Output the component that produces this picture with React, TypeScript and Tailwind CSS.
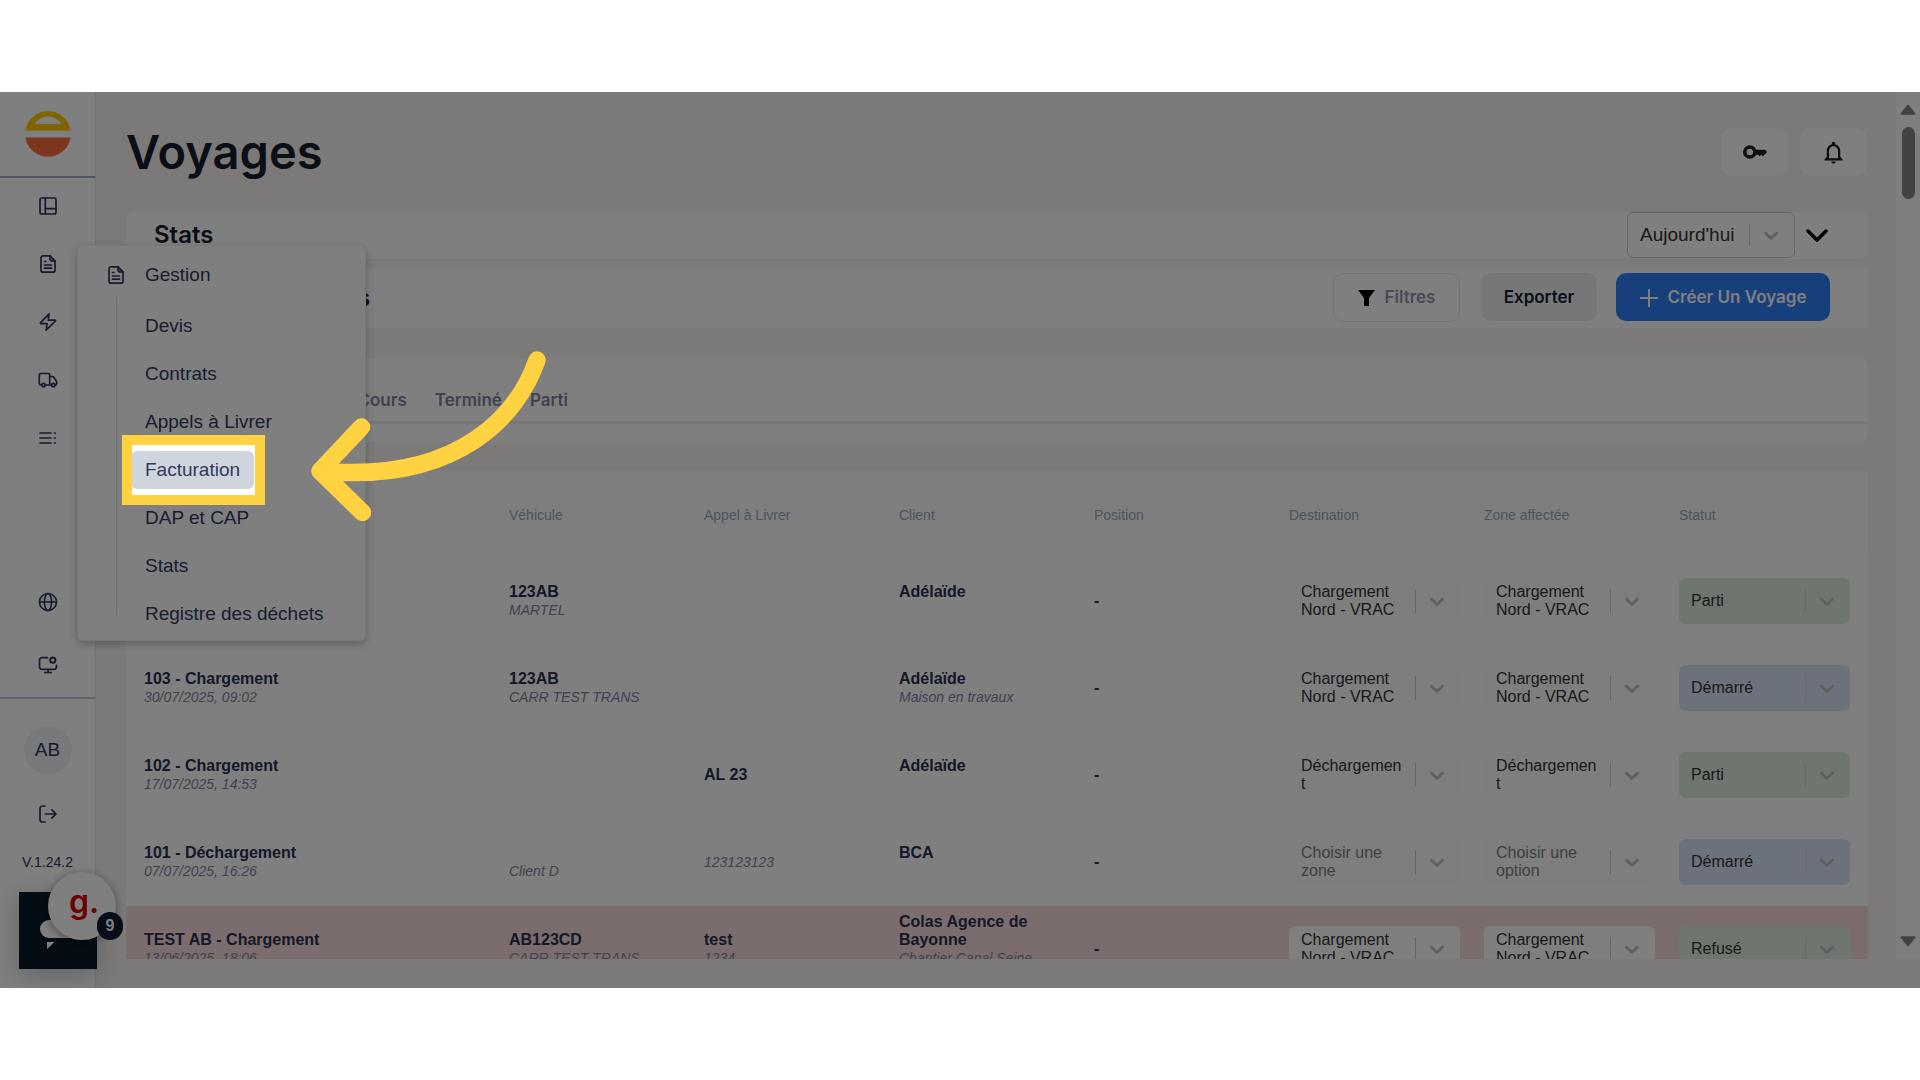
import React, { useState } from 'react';

type Choice = { text: string; placeholder?: boolean };

type Voyage = {
  name?: string;
  date?: string;
  vehicle?: string;
  carrier?: string;
  call?: string;
  callRef?: string;
  client: string;
  site?: string;
  destination: Choice;
  zone: Choice;
  status: string;
  refused?: boolean;
};

const nord: Choice = { text: 'Chargement Nord - VRAC' };
const unload: Choice = { text: 'Déchargement' };

const voyages: Voyage[] = [
  { vehicle: '123AB', carrier: 'MARTEL', client: 'Adélaïde', destination: nord, zone: nord, status: 'Parti' },
  { name: '103 - Chargement', date: '30/07/2025, 09:02', vehicle: '123AB', carrier: 'CARR TEST TRANS', client: 'Adélaïde', site: 'Maison en travaux', destination: nord, zone: nord, status: 'Démarré' },
  { name: '102 - Chargement', date: '17/07/2025, 14:53', call: 'AL 23', client: 'Adélaïde', destination: unload, zone: unload, status: 'Parti' },
  { name: '101 - Déchargement', date: '07/07/2025, 16:26', carrier: 'Client D', callRef: '123123123', client: 'BCA', destination: { text: 'Choisir une zone', placeholder: true }, zone: { text: 'Choisir une option', placeholder: true }, status: 'Démarré' },
  { name: 'TEST AB - Chargement', date: '13/06/2025, 18:06', vehicle: 'AB123CD', carrier: 'CARR TEST TRANS', call: 'test', callRef: '1234', client: 'Colas Agence de Bayonne', site: 'Chantier Canal Seine Nord\u2011Europe', destination: nord, zone: nord, status: 'Refusé', refused: true },
];

const menuItems = ['Devis', 'Contrats', 'Appels à Livrer', 'Facturation', 'DAP et CAP', 'Stats', 'Registre des déchets'];
const tabs = ['Tous', 'Prévu', 'En Cours', 'Terminé', 'Parti'];
const columns = ['Véhicule', 'Appel à Livrer', 'Client', 'Position', 'Destination', 'Zone affectée', 'Statut'];

function Icon({ children }: { children: React.ReactNode }) {
  return (
    <svg className="size-5" viewBox="0 0 20 20" fill="none" stroke="currentColor" strokeWidth="1.7" strokeLinecap="round" strokeLinejoin="round" aria-hidden="true">
      {children}
    </svg>
  );
}

function FileIcon() {
  return (
    <Icon>
      <path d="M12 1.8H5a2 2 0 0 0-2 2v12.4a2 2 0 0 0 2 2h10a2 2 0 0 0 2-2V6.8z" />
      <path d="M12 1.8v3a2 2 0 0 0 2 2h3" fill="currentColor" fillOpacity="0.4" />
      <path d="M6.5 7.5h1.3M6.5 11h7M6.5 14.2h7" />
    </Icon>
  );
}

function Chevron({ className }: { className: string }) {
  return (
    <svg className={className} viewBox="0 0 20 20" fill="currentColor" aria-hidden="true">
      <path d="M4.516 7.548c0.436-0.446 1.043-0.481 1.576 0l3.908 3.747 3.908-3.747c0.533-0.481 1.141-0.446 1.574 0 0.436 0.445 0.408 1.197 0 1.615-0.406 0.418-4.695 4.502-4.695 4.502-0.217 0.223-0.502 0.335-0.787 0.335s-0.57-0.112-0.789-0.335c0 0-4.287-4.084-4.695-4.502s-0.436-1.17 0-1.615z" />
    </svg>
  );
}

/*
Drop-down whose current value can wrap on two lines, the native select lies over it
*/
function SelectBox({ label, choice, options, className, divider = 'bg-[#cccccc]' }: {
  label: string,
  choice: Choice,
  options: string[],
  className: string,
  divider?: string,
}) {
  const [value, setValue] = useState(choice.text);
  const isPlaceholder = choice.placeholder && value === choice.text;

  return (
    <div className={`relative flex items-center rounded-md pl-3 ${className}`}>
      <span className={`flex-1 min-w-0 break-words ${isPlaceholder ? 'text-[#808080]' : 'text-[#333333]'}`}>{value}</span>
      <span className={`ml-3 w-px self-stretch my-[11px] ${divider}`} />
      <Chevron className="size-6 ml-[9px] mr-[11px] text-[#bfbfbf]" />
      <select
        aria-label={label}
        value={value}
        onChange={(e) => setValue(e.target.value)}
        className="absolute inset-0 size-full opacity-0 cursor-pointer"
      >
        {options.map((option) => <option key={option}>{option}</option>)}
      </select>
    </div>
  );
}

function Sidebar() {
  const itemClass = 'flex h-[58px] items-center justify-center';

  return (
    <aside className="flex w-24 shrink-0 flex-col border-r border-[#dfe5ee] bg-white text-[#2f365c]">
      <div className="flex h-[86px] items-center justify-center border-b-2 border-[#a5aecb]">
        <svg className="size-[46px]" viewBox="0 0 46 46" aria-hidden="true">
          <path d="M0.3 19.5a23 23 0 0 1 45.4 0z" fill="#ffc800" />
          <path d="M9.5 13a16 16 0 0 1 27 0z" fill="#fff" />
          <path d="M0.3 26.5a23 23 0 0 0 45.4 0z" fill="#fb6f3f" />
        </svg>
      </div>
      <nav className="-mt-px flex flex-col">
        <a href="#dashboard" aria-label="Tableau de bord" className={itemClass}>
          <Icon><rect x="2" y="2" width="16" height="16" rx="2" /><path d="M7.3 2v16M7.3 12.7H18" /></Icon>
        </a>
        <a href="#gestion" aria-label="Gestion" className={itemClass}><FileIcon /></a>
        <a href="#actions" aria-label="Actions" className={itemClass}>
          <Icon><path d="M11 1.8 2.6 10.6c-.5.6-.3 1 .5 1h6l-1 6.6 9.3-9c.5-.6.3-1-.5-1h-6.6z" /></Icon>
        </a>
        <a href="#transport" aria-label="Transport" className={itemClass}>
          <Icon>
            <path d="M4 15H2.8a1.5 1.5 0 0 1-1.5-1.5V5A1.5 1.5 0 0 1 2.8 3.5h7.4A1.5 1.5 0 0 1 11.7 5v10H7M11.7 6.5h2.6c.6 0 1.2.3 1.5.8l2.5 3.7c.3.4.4.8.4 1.2v1.3a1.5 1.5 0 0 1-1.5 1.5M11.7 15h2" />
            <circle cx="5.5" cy="15" r="1.7" /><circle cx="15.3" cy="15" r="1.7" />
          </Icon>
        </a>
        <a href="#listes" aria-label="Listes" className={itemClass}>
          <Icon><path d="M2 5h11M2 10h11M2 15h11M16.5 5h.8M16.5 10h.8M16.5 15h.8" /></Icon>
        </a>
      </nav>
      <div className="mt-auto flex flex-col">
        <a href="#langue" aria-label="Langue" className="flex h-[62px] items-center justify-center">
          <Icon><circle cx="10" cy="10" r="8.5" /><ellipse cx="10" cy="10" rx="3.6" ry="8.5" /><path d="M1.5 10h17" /></Icon>
        </a>
        <a href="#ecran" aria-label="Écran" className="flex h-16 items-center justify-center">
          <Icon>
            <path d="M9.5 2.7H4a2.5 2.5 0 0 0-2.5 2.5v6.6A2.5 2.5 0 0 0 4 14.3h12a2.5 2.5 0 0 0 2.5-2.5v-1.5M10 14.3v3M6.7 17.5h6.6" />
            <circle cx="14.8" cy="5.2" r="2.6" strokeWidth="2" />
          </Icon>
        </a>
      </div>
      <div className="flex flex-col items-center border-t-2 border-[#b9cbe0] pt-[27px] pb-[116px]">
        <span className="flex size-12 items-center justify-center rounded-full bg-[#eef2f7] text-[19px]">AB</span>
        <button aria-label="Déconnexion" className="mt-[30px]">
          <Icon><path d="M7 2H4.5A2.5 2.5 0 0 0 2 4.5v11A2.5 2.5 0 0 0 4.5 18H7M7.5 10h10.3M13.8 5.8 18 10l-4.2 4.2" /></Icon>
        </button>
        <span className="mt-[28px] text-sm">V.1.24.2</span>
      </div>
    </aside>
  );
}

function TwoLines({ title, detail }: { title?: string; detail?: string }) {
  return (
    <div className="leading-[18px]">
      <p className="min-h-[18px] font-bold">{title}</p>
      <p className="min-h-[18px] text-sm leading-[18px] italic text-[#8184a0]">{detail}</p>
    </div>
  );
}

function VoyageRow({ voyage, label }: { voyage: Voyage; label: string }) {
  const box = `h-[46px] leading-[18px] ${voyage.refused ? 'bg-white' : 'bg-[#fdfdfd]'}`;
  const statusColor = voyage.status === 'Démarré' ? 'bg-[#d8e4f7]' : 'bg-[#deeddf]';

  return (
    <tr className={`h-[87px] ${voyage.refused ? 'bg-[#f7dadc]' : ''}`}>
      <td className="pl-[18px] pb-[2px]"><TwoLines title={voyage.name} detail={voyage.date} /></td>
      <td className="px-3 pb-[2px]"><TwoLines title={voyage.vehicle} detail={voyage.carrier} /></td>
      <td className="px-3 pb-[2px]">
        <div className="leading-[18px]">
          {voyage.call && <p className="font-bold">{voyage.call}</p>}
          {voyage.callRef && <p className="text-sm leading-[18px] italic text-[#8184a0]">{voyage.callRef}</p>}
        </div>
      </td>
      <td className="px-3 pb-[2px]"><TwoLines title={voyage.client} detail={voyage.site} /></td>
      <td className="px-3 pb-[2px] font-bold">-</td>
      <td className="px-3 pb-[2px]">
        <SelectBox label={`Destination ${label}`} choice={voyage.destination} options={[voyage.destination.text]} className={box} />
      </td>
      <td className="px-3 pb-[2px]">
        <SelectBox label={`Zone affectée ${label}`} choice={voyage.zone} options={[voyage.zone.text]} className={box} />
      </td>
      <td className="pl-3 pr-[18px] pb-[2px]">
        <SelectBox label={`Statut ${label}`} choice={{ text: voyage.status }} options={['Parti', 'Démarré', 'Refusé']} className={`h-[46px] ${statusColor}`} divider="bg-[#cccccc]/70" />
      </td>
    </tr>
  );
}

function GestionMenu() {
  return (
    <div className="absolute left-[77px] top-[153px] w-[289px] rounded-md border border-[#f0f0f0] bg-white pt-[9px] pb-[7px] text-[19px] text-[#323a5c] shadow-[0_3px_8px_rgba(0,0,0,0.25)]">
      <div className="flex h-10 items-center pl-7">
        <FileIcon />
        <span className="ml-[19px]">Gestion</span>
      </div>
      <div className="flex">
        <div className="ml-[38px] mt-[2px] mb-[18px] w-px bg-[#e6e6ea]" />
        <ul className="flex flex-col items-start gap-[10px] pl-[14px] pt-3">
          {menuItems.map((item) => (
            <li key={item}>
              <a href={`#${item}`} className={`flex h-[38px] items-center rounded-md px-[14px] ${item === 'Facturation' ? 'bg-[#cfd5dd]' : ''}`}>{item}</a>
            </li>
          ))}
        </ul>
      </div>
    </div>
  );
}

function ChatWidgets() {
  return (
    <>
      <button aria-label="Messagerie" className="absolute left-[19px] bottom-[19px] h-[77px] w-[78px] bg-[#0a1b29] shadow-[0_6px_24px_rgba(10,27,41,0.25)]">
        <svg className="size-full" viewBox="0 0 78 77" aria-hidden="true">
          <path d="M30 28h28v18H30a9 9 0 0 1 0-18zM28 50h7.5l-7.5 7z" fill="#fff" />
        </svg>
      </button>
      <button aria-label="Guide, 9 notifications" className="absolute left-12 bottom-12 size-[68px] rounded-full bg-white shadow-[0_2px_10px_rgba(0,0,0,0.4)]">
        <span className='block pl-1 pb-2 font-["Inter",sans-serif] text-[32px] leading-none font-semibold text-[#d80000]'>g.</span>
        <span className="absolute -right-[7px] bottom-0 flex h-7 w-[26px] items-center justify-center rounded-full bg-[#101a30] text-base font-bold text-white">9</span>
      </button>
    </>
  );
}

function App() {
  const [activeTab, setActiveTab] = useState('Tous');

  return (
    <div className='h-screen bg-white py-[92px] font-["Liberation_Sans",Arial,sans-serif]'>
      <div className="relative flex h-full overflow-hidden bg-[#f9f5f0]">
        <Sidebar />

        <div className="mb-[29px] flex min-w-0 flex-1 overflow-hidden">
          <main className='flex min-w-0 flex-1 flex-col pl-[30px] pr-7 pt-9 font-["Inter",sans-serif]'>
            <header className="flex h-12 shrink-0 items-center justify-between pr-px">
              <h1 className="text-[47px] leading-[48px] font-semibold text-[#151c2e]">Voyages</h1>
              <div className="flex gap-3">
                <button aria-label="Clés" className="flex h-12 w-[66px] items-center justify-center rounded-[10px] bg-white text-[#1c1c20]">
                  <svg className="size-6" viewBox="0 0 24 24" fill="currentColor" aria-hidden="true">
                    <path fillRule="evenodd" d="M6.8 5.2a6.8 6.8 0 1 1 0 13.6 6.8 6.8 0 0 1 0-13.6zM6.8 8.8a3.2 3.2 0 1 0 0 6.4 3.2 3.2 0 0 0 0-6.4z" />
                    <path d="M12.5 9.7h9.6L24 12l-2.5 2.7-1.7 1.5-1.7-1.5-1.5 1.5-1.6-1.5h-2.5z" />
                  </svg>
                </button>
                <button aria-label="Notifications" className="flex h-12 w-[67px] items-center justify-center rounded-[10px] bg-white text-[#1c1c20]">
                  <svg className="size-[27px]" viewBox="0 0 24 24" fill="currentColor" aria-hidden="true">
                    <path d="M12 22c1.1 0 2-.9 2-2h-4c0 1.1.9 2 2 2zm6-6v-5c0-3.07-1.63-5.64-4.5-6.32V4c0-.83-.67-1.5-1.5-1.5s-1.5.67-1.5 1.5v.68C7.64 5.36 6 7.92 6 11v5l-2 2v1h16v-1l-2-2zm-2 1H8v-6c0-2.48 1.51-4.5 4-4.5s4 2.02 4 4.5v6z" />
                  </svg>
                </button>
              </div>
            </header>

            <section className="mt-9 flex h-[47px] shrink-0 items-center rounded-lg bg-white pl-7 pr-10">
              <h2 className="pb-[2px] text-2xl font-semibold text-[#151c2e]">Stats</h2>
              <SelectBox
                label="Période"
                choice={{ text: "Aujourd'hui" }}
                options={["Aujourd'hui", 'Hier', 'Cette semaine']}
                className='ml-auto h-[46px] w-[168px] self-start border border-[#cccccc] font-["Liberation_Sans",Arial,sans-serif] text-[19px]'
              />
              <button aria-label="Déplier les stats" className="ml-[11px]">
                <svg className="h-[13px] w-[22px]" viewBox="0 0 22 13" fill="none" stroke="#000" strokeWidth="3.5" strokeLinecap="round" aria-hidden="true">
                  <path d="M2 2l9 9 9-9" />
                </svg>
              </button>
            </section>

            <section className="mt-[9px] flex h-[60px] shrink-0 items-center bg-white pl-[34px] pr-[38px] pb-[2px] text-[17px] font-semibold">
              <h2 className="pt-[2px] text-2xl text-[#151c2e]">Liste des Voyages</h2>
              <button className="ml-auto flex h-[49px] w-[127px] items-center justify-center gap-[10px] rounded-[10px] border border-[#ebebef] pt-[2px] text-[#9193ad]">
                <svg className="h-4 w-[17px]" viewBox="0 0 17 16" aria-hidden="true"><path d="M0 0h17l-6 8v8H6V8z" fill="#000" /></svg>
                Filtres
              </button>
              <button className="ml-[21px] h-12 w-[116px] rounded-[10px] bg-[#eeeeee] pt-[2px] text-[#151c2e]">Exporter</button>
              <button className="ml-[19px] flex h-12 w-[214px] items-center justify-center gap-[10px] rounded-[10px] bg-[#2c7ff7] pt-[2px] text-white">
                <svg className="size-[18px]" viewBox="0 0 18 18" stroke="currentColor" strokeWidth="2" aria-hidden="true"><path d="M9 0v18M0 9h18" /></svg>
                Créer Un Voyage
              </button>
            </section>

            <section className="mt-[30px] h-[84px] shrink-0 rounded-lg bg-white">
              <div className="flex h-[66px] items-end gap-7 border-b-[3px] border-[#ececee] pl-[63px] pb-[9px]">
                {tabs.map((tab) => (
                  <button key={tab} onClick={() => setActiveTab(tab)} aria-pressed={tab === activeTab} className="text-[17px] leading-6 font-semibold text-[#8083a3]">{tab}</button>
                ))}
              </div>
            </section>

            <section className='mt-[29px] min-h-0 flex-1 overflow-hidden bg-white font-["Liberation_Sans",Arial,sans-serif]'>
              <table className="w-full table-fixed text-left text-[#2b3150]">
                <colgroup>
                  <col />
                  {columns.slice(0, 6).map((column) => <col key={column} className="w-[195px]" />)}
                  <col className="w-[201px]" />
                </colgroup>
                <thead>
                  <tr className="h-[87px] bg-[#fcfdfd]">
                    <td />
                    {columns.map((column) => (
                      <th key={column} className="px-3 text-sm font-normal text-[#98a6bc]">{column}</th>
                    ))}
                  </tr>
                </thead>
                <tbody>
                  {voyages.map((voyage, index) => <VoyageRow key={index} voyage={voyage} label={voyage.name ?? voyage.client} />)}
                </tbody>
              </table>
            </section>
          </main>

          <div className="flex w-6 shrink-0 flex-col items-center bg-[#fcfcfc] pt-3 pb-3">
            <svg className="h-[11px] w-4" viewBox="0 0 16 11" fill="#858585" stroke="#858585" strokeWidth="2" strokeLinejoin="round" aria-hidden="true"><path d="M8 1.5 1.5 9.8h13z" /></svg>
            <div className="mt-3 h-[72px] w-[13px] rounded-full bg-[#858585]" />
            <svg className="mt-auto h-[11px] w-4" viewBox="0 0 16 11" fill="#858585" stroke="#858585" strokeWidth="2" strokeLinejoin="round" aria-hidden="true"><path d="M8 9.5 1.5 1.2h13z" /></svg>
          </div>
        </div>

        <ChatWidgets />
        <GestionMenu />

        {/* Guide step: dims everything but the highlighted entry */}
        <div className="pointer-events-none absolute left-[122px] top-[343px] h-[70px] w-[143px] border-[10px] border-[#ffd242] shadow-[0_0_0_2000px_rgba(0,0,0,0.5)]" />
        <svg className="pointer-events-none absolute left-[300px] top-[248px] h-[190px] w-[260px]" viewBox="0 0 260 190" fill="none" stroke="#ffd242" strokeWidth="17.5" strokeLinecap="round" strokeLinejoin="round" aria-hidden="true">
          <path d="M237 20C219 72 162 144 20 131M61.5 87 20 131l42.5 41.5" />
        </svg>
      </div>
    </div>
  );
}

export default App;
